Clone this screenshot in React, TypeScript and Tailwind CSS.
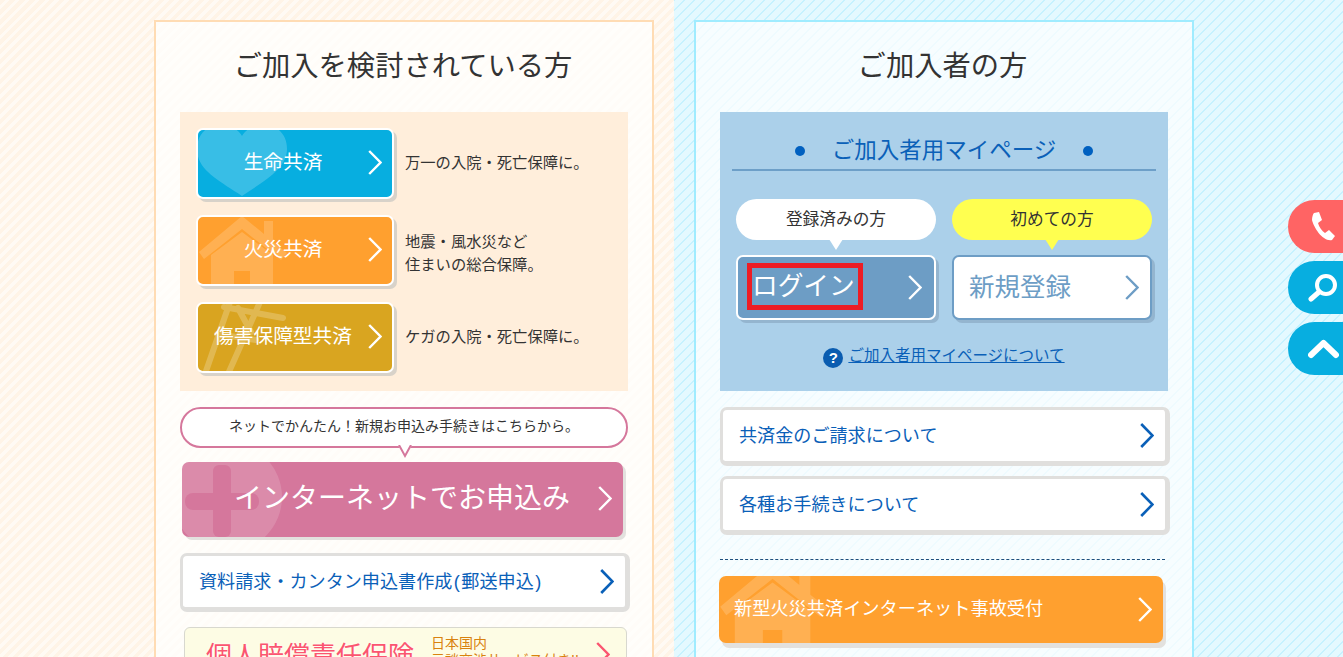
import React from "react";

const FONT = "font-['Liberation_Sans','Noto_Sans_CJK_JP',sans-serif]";

function Chevron({ color = "#fff", w = 2.4, className = "" }: { color?: string; w?: number; className?: string }) {
  return (
    <svg width="14" height="25" viewBox="0 0 14 25" className={className} fill="none">
      <path d="M1.2 1 L12.5 12.5 L1.2 24" stroke={color} strokeWidth={w} />
    </svg>
  );
}

function Heart() {
  return (
    <svg className="absolute left-0 top-0" width="92" height="67" viewBox="0 0 92 67">
      <path d="M44 66 C20 50 -1 40 -1 19 C-1 4 9 -5 22 -5 C32 -5 40 -1 44 6 C48 -1 56 -5 66 -5 C80 -5 89 5 89 19 C89 38 68 50 44 66 Z" fill="#fff" opacity="0.2" />
    </svg>
  );
}

function House({ className = "", width = 92, height = 67 }: { className?: string; width?: number; height?: number }) {
  return (
    <svg className={className} width={width} height={height} viewBox="0 0 92 67">
      <g fill="#fff" opacity="0.17">
        <path d="M13 67 V38 L44 15 L75 38 V67 H52 V54 H36 V67 Z" />
        <path d="M1 35 L44 -1 L66 17 V4 H75 V25 L89 36 L83 43 L44 12 L6 42 Z" />
      </g>
    </svg>
  );
}

function Ladder() {
  return (
    <svg className="absolute left-0 top-0" width="92" height="67" viewBox="0 0 92 67">
      <g stroke="#fff" opacity="0.22" strokeWidth="6" fill="none" strokeLinecap="round">
        <path d="M7 70 L32 -2 M30 70 L62 -2" />
        <path d="M26 3 L85 14 M19 30 L58 36 M40 4 L53 28" />
      </g>
    </svg>
  );
}

function ProductRow({ bg, label, children, art, descClass }: { bg: string; label: string; children: React.ReactNode; art: React.ReactNode; descClass: string }) {
  return (
    <div className="flex items-center">
      <div className={`relative flex h-[71px] w-[198px] shrink-0 items-center overflow-hidden rounded-[7px] border-2 border-white ${bg} shadow-[3px_3px_0_#d8d2c9]`}>
        {art}
        <span className="relative flex-1 pb-[3px] pl-[7px] pr-[31px] text-center text-[19.7px] leading-[26px] text-white">{label}</span>
        <Chevron className="absolute right-[10px] top-[20px]" />
      </div>
      <div className={`ml-[11px] text-[15.3px] leading-[23px] text-[#333] ${descClass}`}>{children}</div>
    </div>
  );
}

function LinkRow({ children }: { children: React.ReactNode }) {
  return (
    <div className="flex h-[59px] w-[450px] items-center justify-between rounded-[7px] border-[3px] border-b-[5px] border-r-[5px] border-[#e0dfdd] bg-white pl-[16px] pr-[11px]">
      <span className="pt-[2px] text-[18.1px] text-[#0a60b8]">{children}</span>
      <Chevron color="#0a60b8" w={2.6} />
    </div>
  );
}

export default function App() {
  return (
    <div className={`${FONT} relative flex h-[657px] w-[1343px] overflow-hidden text-[#333]`}>
      <div className="flex h-full w-[674px] justify-end bg-[repeating-linear-gradient(135deg,#fff4e7_0,#fff4e7_3.54px,#fffaf4_3.54px,#fffaf4_7.07px)] pr-[20px] pt-[20px]">
        <section className="h-[800px] w-[500px] border-2 border-[#ffdcb4] bg-[repeating-linear-gradient(135deg,#fffcf8_0,#fffcf8_3.54px,#fffefb_3.54px,#fffefb_7.07px)] px-[24px]">
          <h2 className="mt-[25px] pr-[2px] text-center text-[28.3px] leading-[38px] text-[#333]">ご加入を検討されている方</h2>
          <div className="mt-[27px] flex h-[279px] flex-col justify-between bg-[#ffeedb] px-[16px] pb-[18px] pt-[16px]">
            <ProductRow bg="bg-[#07aee0]" label="生命共済" art={<Heart />} descClass="pb-[3px]">万一の入院・死亡保障に。</ProductRow>
            <ProductRow bg="bg-[#ffa02f]" label="火災共済" art={<House className="absolute left-0 top-0" />} descClass="pt-[4px]">
              地震・風水災など<br />住まいの総合保障。
            </ProductRow>
            <ProductRow bg="bg-[#d9a520]" label="傷害保障型共済" art={<Ladder />} descClass="pb-[3px]">ケガの入院・死亡保障に。</ProductRow>
          </div>

          <div className="relative mt-[16px] flex h-[41px] items-center justify-center rounded-[21px] border-2 border-[#d5779c] bg-white pb-[2px] text-[14px]">
            ネットでかんたん！新規お申込み手続きはこちらから。
            <svg className="absolute left-[215px] top-[36px]" width="16" height="14" viewBox="0 0 16 14">
              <path d="M1 0 L8 12 L15 0 Z" fill="#fff" />
              <path d="M2 0 L8 11 L14 0" fill="none" stroke="#d5779c" strokeWidth="2" />
            </svg>
          </div>

          <div className="relative ml-[2px] mt-[14px] flex h-[75px] w-[441px] items-center overflow-hidden rounded-[7px] bg-[#d5779c] shadow-[3px_3px_0_#e3e1de]">
            <div className="absolute -left-[10px] -top-[20px] h-[110px] w-[110px] rounded-full bg-white/15" />
            <div className="absolute left-[31px] top-[3px] h-[72px] w-[18px] rounded-[6px] bg-[#d5779c]" />
            <div className="absolute left-[3px] top-[31px] h-[17px] w-[74px] rounded-[8px] bg-[#d5779c]" />
            <span className="relative ml-[52px] pb-[2px] text-[28px] text-white">インターネットでお申込み</span>
            <Chevron className="absolute right-[11px] top-[24px]" />
          </div>

          <div className="mt-[16px]">
            <LinkRow>
              資料請求・カンタン申込書作成<span className="mx-[1.5px]">(</span>郵送申込<span className="mx-[1.5px]">)</span>
            </LinkRow>
          </div>

          <div className="relative ml-[4px] mt-[15px] flex h-[60px] w-[443px] items-start rounded-[6px] border border-[#d8d8cf] bg-[#fdfce4]">
            <span className="ml-[21px] mt-[11px] text-[26px] leading-[34px] text-[#fb5570] [text-shadow:0_0_3px_#fff]">個人賠償責任保険</span>
            <span className="ml-[17px] mt-[7px] text-[14px] leading-[17px] text-[#d9820f]">日本国内<br />示談交渉サービス付き!!</span>
            <Chevron color="#fb5570" className="absolute right-[16px] top-[14px]" />
          </div>
        </section>
      </div>

      <div className="flex h-full flex-1 bg-[repeating-linear-gradient(135deg,#c6f2ff_0,#c6f2ff_1.4px,#e4f9ff_1.4px,#e4f9ff_7.07px)] pl-[20px] pt-[20px]">
        <section className="h-[800px] w-[500px] border-2 border-[#a0ecff] bg-[repeating-linear-gradient(135deg,#eefbff_0,#eefbff_1.4px,#f7fdff_1.4px,#f7fdff_7.07px)] px-[24px]">
          <h2 className="mt-[25px] pr-[3px] text-center text-[28.3px] leading-[38px] text-[#333]">ご加入者の方</h2>
          <div className="mt-[27px] h-[279px] bg-[#abd0ea] px-[12px] pt-[21px]">
            <div className="flex h-[38px] items-center justify-center gap-[27px] border-b-2 border-[#6d9fc8] pb-[1px] text-[22.5px] text-[#0a60b8]">
              <span className="h-[10px] w-[10px] rounded-full bg-[#0060c0]" />
              <span>ご加入者用マイページ</span>
              <span className="h-[10px] w-[10px] rounded-full bg-[#0060c0]" />
            </div>
            <div className="mt-[28px] flex gap-[16px] px-[4px]">
              <div className="w-[200px]">
                <div className="relative flex h-[41px] items-center justify-center rounded-[21px] bg-white text-[16.7px]">
                  登録済みの方
                  <span className="absolute left-[93px] top-[40px] h-0 w-0 border-x-[7px] border-t-[11px] border-x-transparent border-t-white" />
                </div>
                <div className="relative mt-[15px] flex h-[65px] items-center rounded-[7px] border-2 border-white bg-[#6d9dc5] shadow-[3px_3px_0_#94b5cf]">
                  <span className="-mt-[2px] ml-[9px] border-[5px] border-[#ed1c24] py-[1px] pr-[3px] text-[25.7px] leading-[35px] text-white">ログイン</span>
                  <Chevron className="absolute right-[12px] top-[18px]" />
                </div>
              </div>
              <div className="w-[200px]">
                <div className="relative flex h-[41px] items-center justify-center rounded-[21px] bg-[#ffff50] text-[16.7px]">
                  初めての方
                  <span className="absolute left-[93px] top-[40px] h-0 w-0 border-x-[7px] border-t-[11px] border-x-transparent border-t-[#ffff50]" />
                </div>
                <div className="relative mt-[15px] flex h-[65px] items-center rounded-[7px] border-2 border-[#6d9dc5] bg-white shadow-[3px_3px_0_#94b5cf]">
                  <span className="ml-[15px] text-[25.5px] text-[#6d9dc5]">新規登録</span>
                  <Chevron color="#6d9dc5" className="absolute right-[11px] top-[18px]" />
                </div>
              </div>
            </div>
            <div className="mt-[26px] flex items-center justify-center gap-[5px]">
              <span className="flex h-[20px] w-[20px] items-center justify-center rounded-full bg-[#0a5cb0] text-[15px] font-bold text-white">?</span>
              <span className="pb-[4px] text-[15.5px] leading-[20px] text-[#0a60b8] underline">ご加入者用マイページについて</span>
            </div>
          </div>

          <div className="mt-[16px] flex w-[450px] flex-col gap-[10px]">
            <LinkRow>共済金のご請求について</LinkRow>
            <LinkRow>各種お手続きについて</LinkRow>
          </div>
          <div className="mt-[24px] w-[445px] border-t border-dashed border-[#1d4f7d]" />
          <div className="relative -ml-[1px] mt-[16px] flex h-[67px] w-[444px] items-center overflow-hidden rounded-[7px] bg-[#ffa02f] shadow-[3px_5px_0_#e3e1de]">
            <House className="absolute left-0 -top-[12px]" width={112} height={82} />
            <span className="relative ml-[15px] text-[18.2px] text-white">新型火災共済インターネット事故受付</span>
            <Chevron className="absolute right-[11px] top-[21px]" />
          </div>
        </section>
      </div>

      <div className="absolute right-0 top-[200px] flex flex-col gap-[8px]">
        <div className="flex h-[53px] w-[55px] items-center rounded-l-[27px] bg-[#ff6464] pl-[23px]">
          <svg width="24" height="30" viewBox="0 0 24 30" fill="#fff">
            <path d="M3 1 L8 0 L11 8 L7 11 C8 15 11 19 14 21 L18 18 L24 24 L21 28 C12 30 3 16 1 8 C1 5 2 2 3 1 Z" />
          </svg>
        </div>
        <div className="flex h-[53px] w-[55px] items-center rounded-l-[27px] bg-[#07aee0] pl-[20px]">
          <svg width="30" height="30" viewBox="0 0 30 30" fill="none" stroke="#fff">
            <circle cx="18" cy="12" r="9" strokeWidth="4" />
            <path d="M11 19 L3 26" strokeWidth="5" strokeLinecap="round" />
          </svg>
        </div>
        <div className="flex h-[53px] w-[55px] items-center rounded-l-[27px] bg-[#07aee0] pl-[20px]">
          <svg width="31" height="20" viewBox="0 0 31 20" fill="none" stroke="#fff">
            <path d="M3 16 L15.5 4 L28 16" strokeWidth="6" strokeLinecap="round" strokeLinejoin="round" />
          </svg>
        </div>
      </div>
    </div>
  );
}
